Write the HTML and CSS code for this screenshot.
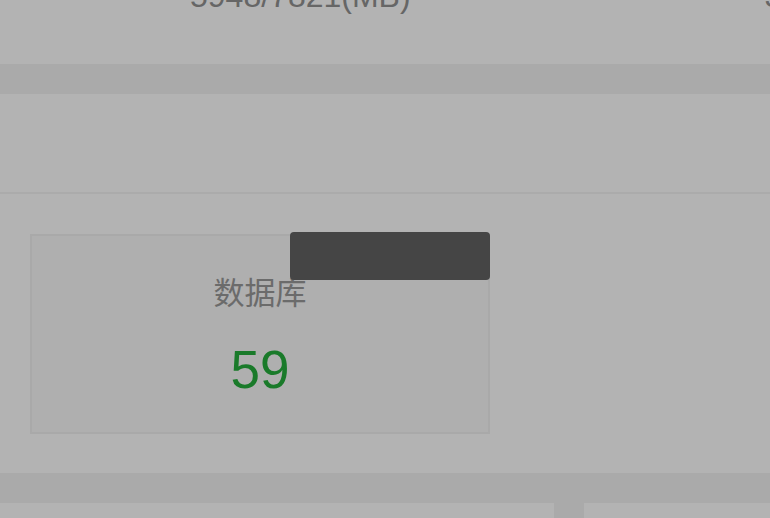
FILE: index.html
```html
<!DOCTYPE html>
<html lang="zh-CN">
<head>
<meta charset="utf-8">
<title>数据库</title>
<link rel="stylesheet" href="styles.css">
</head>
<body>
<div class="page">
  <section class="stats">
    <div class="stat-value">5948/7821(MB)</div>
    <div class="stat-value stat-next">3</div>
  </section>
  <section class="panel">
    <div class="panel-head"></div>
    <div class="panel-body">
      <div class="card">
        <div class="card-label">数据库</div>
        <div class="card-num">59</div>
        <div class="tooltip"></div>
      </div>
    </div>
  </section>
  <section class="bottom-row">
    <div class="bottom-left"></div>
    <div class="bottom-right"></div>
  </section>
</div>
</body>
</html>
```

FILE: styles.css
```css
html, body {
  margin: 0;
  padding: 0;
  width: 770px;
  height: 518px;
  overflow: hidden;
  background: #aaaaaa;
  font-family: "Liberation Sans", "Noto Sans CJK SC", sans-serif;
}

.page {
  display: flex;
  flex-direction: column;
  gap: 30px;
  width: 770px;
}

.stats {
  height: 64px;
  background: #b3b3b3;
  display: flex;
  padding-left: 190px;
  gap: 354px;
  white-space: nowrap;
  overflow: hidden;
}

.stat-value {
  font-size: 32px;
  line-height: 32px;
  color: #666666;
  margin-top: -20px;
}

.panel {
  background: #b3b3b3;
  display: flex;
  flex-direction: column;
}

.panel-head {
  height: 98px;
  border-bottom: 2px solid #ababab;
}

.panel-body {
  padding: 40px 30px 39px;
}

.card {
  position: relative;
  box-sizing: border-box;
  width: 460px;
  height: 200px;
  background: #afafaf;
  border: 2px solid #a9a9a9;
  display: flex;
  flex-direction: column;
  align-items: center;
  padding-top: 39px;
}

.card-label {
  font-family: "Noto Sans CJK SC", sans-serif;
  font-size: 31px;
  line-height: 31px;
  color: #6b6b6b;
}

.card-num {
  margin-top: 37px;
  font-size: 53px;
  line-height: 53px;
  color: #1a7a2a;
}

.tooltip {
  position: absolute;
  left: 258px;
  top: -4px;
  width: 200px;
  height: 48px;
  background: #454545;
  border-radius: 4px;
}

.bottom-row {
  display: flex;
  gap: 30px;
  height: 40px;
}

.bottom-left {
  width: 554px;
  background: #b3b3b3;
}

.bottom-right {
  flex: 1;
  background: #b3b3b3;
}
```
